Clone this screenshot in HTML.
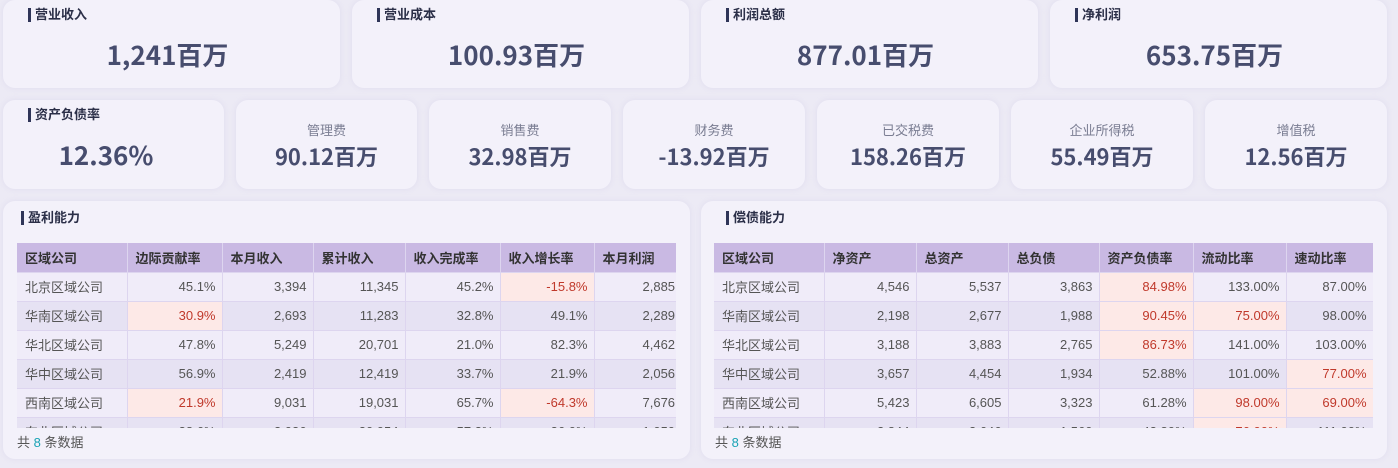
<!DOCTYPE html>
<html><head><meta charset="utf-8"><style>
*{margin:0;padding:0;box-sizing:border-box}
body{width:1398px;height:468px;background:#eceaf5;font-family:"Liberation Sans","Noto Sans CJK SC",sans-serif;position:relative;overflow:hidden;color:#444}
.card{position:absolute;background:#f3f1fa;border-radius:12px;box-shadow:0 0 6px rgba(200,195,225,.35)}
.tt{position:absolute;left:25px;top:8px;font-size:13px;font-weight:bold;color:#2b2f48;border-left:3px solid #2f3558;padding-left:4px;line-height:14px}
.big{position:absolute;left:0;right:0;text-align:center;font-weight:bold;color:#474d6e;font-family:"Noto Sans CJK SC",sans-serif}
.sm{position:absolute;left:0;right:0;top:20px;text-align:center;font-size:13px;color:#7a7d92;font-family:"Noto Sans CJK SC",sans-serif}
.clip{position:absolute;top:42px;height:185px;overflow:hidden}
table{border-collapse:collapse;font-size:13px;table-layout:fixed}
th{background:#c9b9e3;height:29px;text-align:left;padding-left:8px;font-weight:bold;color:#333;border-right:1px solid #ddd5ef}
td{height:29px;border-right:1px solid #ddd5ef;border-top:1px solid #ddd5ef;text-align:right;padding-right:6px;color:#555}
td:first-child{text-align:left;padding-left:8px}
tr.o td{background:#f0ecf9}tr.e td{background:#e6e2f3}
td.r{background:#fde9e7!important;color:#c0392b}
.ft{position:absolute;left:14px;top:231px;font-size:13px;color:#555}
.ft b{color:#1aa3b5;font-weight:normal}
</style></head><body>
<div class="card" style="left:3px;top:0;width:337px;height:88px"><div class="tt">营业收入</div><div class="big" style="top:36px;font-size:26px;left:-8px">1,241百万</div></div>
<div class="card" style="left:352px;top:0;width:337px;height:88px"><div class="tt">营业成本</div><div class="big" style="top:36px;font-size:26px;left:-8px">100.93百万</div></div>
<div class="card" style="left:701px;top:0;width:337px;height:88px"><div class="tt">利润总额</div><div class="big" style="top:36px;font-size:26px;left:-8px">877.01百万</div></div>
<div class="card" style="left:1050px;top:0;width:337px;height:88px"><div class="tt">净利润</div><div class="big" style="top:36px;font-size:26px;left:-8px">653.75百万</div></div>

<div class="card" style="left:3px;top:100px;width:221px;height:89px"><div class="tt">资产负债率</div><div class="big" style="top:36px;font-size:26px;left:-15px">12.36%</div></div>
<div class="card" style="left:236px;top:100px;width:181px;height:89px"><div class="sm">管理费</div><div class="big" style="top:40px;font-size:22px">90.12百万</div></div>
<div class="card" style="left:429px;top:100px;width:182px;height:89px"><div class="sm">销售费</div><div class="big" style="top:40px;font-size:22px">32.98百万</div></div>
<div class="card" style="left:623px;top:100px;width:182px;height:89px"><div class="sm">财务费</div><div class="big" style="top:40px;font-size:22px">-13.92百万</div></div>
<div class="card" style="left:817px;top:100px;width:182px;height:89px"><div class="sm">已交税费</div><div class="big" style="top:40px;font-size:22px">158.26百万</div></div>
<div class="card" style="left:1011px;top:100px;width:182px;height:89px"><div class="sm">企业所得税</div><div class="big" style="top:40px;font-size:22px">55.49百万</div></div>
<div class="card" style="left:1205px;top:100px;width:182px;height:89px"><div class="sm">增值税</div><div class="big" style="top:40px;font-size:22px">12.56百万</div></div>

<div class="card" style="left:3px;top:201px;width:687px;height:258px"><div class="tt" style="left:18px;top:10px">盈利能力</div>
<div class="clip" style="left:14px;width:659px"><table style="width:700px">
<colgroup><col style="width:110px"><col style="width:95px"><col style="width:91px"><col style="width:92px"><col style="width:95px"><col style="width:94px"><col style="width:123px"></colgroup>
<tr><th>区域公司</th><th>边际贡献率</th><th>本月收入</th><th>累计收入</th><th>收入完成率</th><th>收入增长率</th><th>本月利润</th></tr>
<tr class="o"><td>北京区域公司</td><td>45.1%</td><td>3,394</td><td>11,345</td><td>45.2%</td><td class="r">-15.8%</td><td style="text-align:left;padding-left:48px">2,885</td></tr>
<tr class="e"><td>华南区域公司</td><td class="r">30.9%</td><td>2,693</td><td>11,283</td><td>32.8%</td><td>49.1%</td><td style="text-align:left;padding-left:48px">2,289</td></tr>
<tr class="o"><td>华北区域公司</td><td>47.8%</td><td>5,249</td><td>20,701</td><td>21.0%</td><td>82.3%</td><td style="text-align:left;padding-left:48px">4,462</td></tr>
<tr class="e"><td>华中区域公司</td><td>56.9%</td><td>2,419</td><td>12,419</td><td>33.7%</td><td>21.9%</td><td style="text-align:left;padding-left:48px">2,056</td></tr>
<tr class="o"><td>西南区域公司</td><td class="r">21.9%</td><td>9,031</td><td>19,031</td><td>65.7%</td><td class="r">-64.3%</td><td style="text-align:left;padding-left:48px">7,676</td></tr>
<tr class="e"><td>东北区域公司</td><td>38.6%</td><td>3,036</td><td>20,054</td><td>57.3%</td><td>36.0%</td><td style="text-align:left;padding-left:48px">1,050</td></tr>
</table></div>
<div class="ft">共 <b>8</b> 条数据</div></div>

<div class="card" style="left:701px;top:201px;width:686px;height:258px"><div class="tt" style="left:25px;top:10px">偿债能力</div>
<div class="clip" style="left:13px;width:659px"><table style="width:659px">
<colgroup><col style="width:110px"><col style="width:92px"><col style="width:92px"><col style="width:91px"><col style="width:94px"><col style="width:93px"><col style="width:87px"></colgroup>
<tr><th>区域公司</th><th>净资产</th><th>总资产</th><th>总负债</th><th>资产负债率</th><th>流动比率</th><th>速动比率</th></tr>
<tr class="o"><td>北京区域公司</td><td>4,546</td><td>5,537</td><td>3,863</td><td class="r">84.98%</td><td>133.00%</td><td>87.00%</td></tr>
<tr class="e"><td>华南区域公司</td><td>2,198</td><td>2,677</td><td>1,988</td><td class="r">90.45%</td><td class="r">75.00%</td><td>98.00%</td></tr>
<tr class="o"><td>华北区域公司</td><td>3,188</td><td>3,883</td><td>2,765</td><td class="r">86.73%</td><td>141.00%</td><td>103.00%</td></tr>
<tr class="e"><td>华中区域公司</td><td>3,657</td><td>4,454</td><td>1,934</td><td>52.88%</td><td>101.00%</td><td class="r">77.00%</td></tr>
<tr class="o"><td>西南区域公司</td><td>5,423</td><td>6,605</td><td>3,323</td><td>61.28%</td><td class="r">98.00%</td><td class="r">69.00%</td></tr>
<tr class="e"><td>东北区域公司</td><td>2,844</td><td>3,646</td><td>1,560</td><td>42.80%</td><td class="r">76.00%</td><td>111.00%</td></tr>
</table></div>
<div class="ft">共 <b>8</b> 条数据</div></div>
</body></html>
